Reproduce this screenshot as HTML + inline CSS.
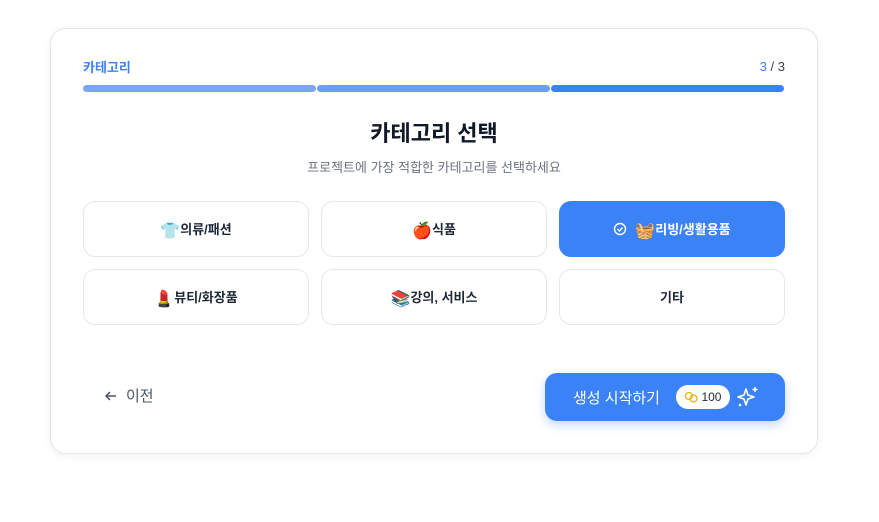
<!DOCTYPE html>
<html><head><meta charset="utf-8"><style>
*{box-sizing:border-box;margin:0;padding:0}
body{width:879px;height:522px;background:#fff;font-family:"Liberation Sans","Noto Sans CJK KR",sans-serif;position:relative;overflow:hidden}
.card{position:absolute;left:50px;top:28px;width:768px;height:426px;border:1px solid #e5e7eb;border-radius:16px;background:#fff;box-shadow:0 2px 8px rgba(0,0,0,.06)}
.lbl{position:absolute;left:32px;top:28px;font-size:13px;color:#3b82f6;font-weight:600}
.cnt{position:absolute;right:32px;top:30px;font-size:13px;color:#374151}
.bar{position:absolute;top:56px;height:7px;border-radius:4px}
h1{position:absolute;left:0;width:100%;top:87px;text-align:center;font-size:22px;font-weight:700;color:#111827}
.sub{position:absolute;left:0;width:100%;top:128px;text-align:center;font-size:13px;color:#6b7280}
.opt{position:absolute;width:226px;height:56px;border:1px solid #e5e7eb;border-radius:12px;display:flex;align-items:center;justify-content:center;font-size:13px;font-weight:600;color:#1f2937;line-height:1}
.opt .e{font-size:16px;line-height:16px;position:relative;top:3px}
.sel{background:#3b82f6;border-color:#3b82f6;color:#fff}
.prev{position:absolute;left:53px;top:356px;font-size:15px;color:#4b5563;display:flex;align-items:center;gap:8px}
.go{position:absolute;left:494px;top:344px;width:240px;height:48px;background:#3b82f6;border-radius:12px;box-shadow:0 4px 10px rgba(59,130,246,.3);display:flex;align-items:center;padding-left:28px;color:#fff;font-size:15px}
.pill{margin-left:16px;background:#fff;border-radius:12px;height:24px;width:54px;display:flex;align-items:center;justify-content:center;color:#1f2937;font-size:12px;gap:3px}
</style></head><body>
<div class="card">
<div class="lbl">카테고리</div>
<div class="cnt"><span style="color:#3b82f6">3</span> / 3</div>
<div class="bar" style="left:32px;width:233px;background:#7aa7f5"></div>
<div class="bar" style="left:266px;width:233px;background:#6b9ef4"></div>
<div class="bar" style="left:500px;width:233px;background:#3b82f6"></div>
<h1>카테고리 선택</h1>
<div class="sub">프로젝트에 가장 적합한 카테고리를 선택하세요</div>
<div class="opt" style="left:32px;top:172px"><span class="e">👕</span>의류/패션</div>
<div class="opt" style="left:270px;top:172px"><span class="e">🍎</span>식품</div>
<div class="opt sel" style="left:508px;top:172px"><svg width="14" height="14" viewBox="0 0 14 14" style="margin-right:8px"><circle cx="7" cy="7" r="5.5" fill="none" stroke="#fff" stroke-width="1.4"/><path d="M4.5 7l2 2 3-3.5" fill="none" stroke="#fff" stroke-width="1.4"/></svg><span class="e">🧺</span>리빙/생활용품</div>
<div class="opt" style="left:32px;top:240px"><span class="e">💄</span>뷰티/화장품</div>
<div class="opt" style="left:270px;top:240px"><span class="e">📚</span>강의, 서비스</div>
<div class="opt" style="left:508px;top:240px">기타</div>
<div class="prev"><svg width="14" height="14" viewBox="0 0 14 14"><path d="M12 7H2M6 3L2 7l4 4" fill="none" stroke="#4b5563" stroke-width="1.5"/></svg>이전</div>
<div class="go">생성 시작하기<div class="pill"><svg width="14" height="12" viewBox="0 0 14 12"><circle cx="5" cy="5" r="3.5" fill="none" stroke="#eab308" stroke-width="1.3"/><circle cx="9.5" cy="7.5" r="3.5" fill="none" stroke="#eab308" stroke-width="1.3"/></svg>100</div><svg width="24" height="24" viewBox="0 0 24 24" style="margin-left:6px"><path d="M10 4l2 6 6 2-6 2-2 6-2-6-6-2 6-2z" fill="none" stroke="#fff" stroke-width="1.6" stroke-linejoin="round"/><path d="M19 2v5M16.5 4.5h5" stroke="#fff" stroke-width="1.5"/><circle cx="4" cy="20" r="1.3" fill="#fff"/></svg></div>
</div>
</body></html>
